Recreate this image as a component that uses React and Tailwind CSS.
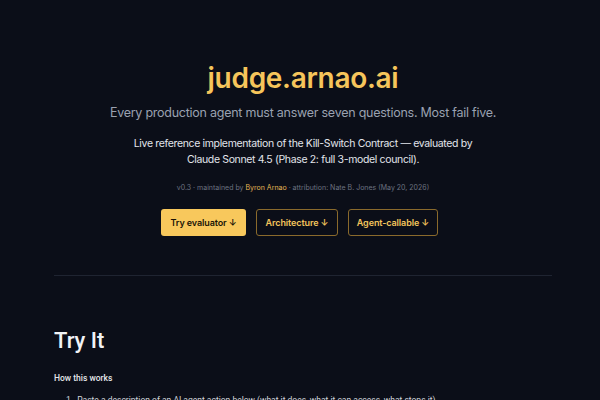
export default function App() {
  const sans = { fontFamily: "Inter, 'Noto Sans', sans-serif" };
  return (
    <div className="min-h-[400px] h-[400px] overflow-hidden bg-[#0b0e18] text-[#e5e7eb]" style={sans}>
      <div className="ml-[54px] w-[498px]">
        <header className="flex flex-col items-center pt-[58px] pb-[39px] border-b border-[#1f2431]">
          <h1 className="text-[28px] leading-[40px] font-semibold text-[#f6c55b] tracking-[-0.3px]">judge.arnao.ai</h1>
          <p className="mt-[5px] text-[12.5px] leading-[20px] text-[#9aa1b0] tracking-[-0.25px]">
            Every production agent must answer seven questions. Most fail five.
          </p>
          <p className="mt-[13px] text-[10.5px] leading-[16px] text-[#e2e5eb] text-center tracking-[-0.35px]">
            Live reference implementation of the Kill-Switch Contract — evaluated by
            <br />
            Claude Sonnet 4.5 (Phase 2: full 3-model council).
          </p>
          <p className="mt-[14px] text-[7px] leading-[12px] text-[#6b7280]">
            v0.3 · maintained by <span className="text-[#e3b556]">Byron Arnao</span> · attribution: Nate B. Jones (May 20, 2026)
          </p>
          <div className="mt-[15px] mr-[7px] flex gap-[10px]">
            <button className="h-[27px] w-[85px] rounded-[3px] bg-[#f8c85c] text-[9px] font-semibold text-[#1a1406] tracking-[-0.1px]">
              Try evaluator ↓
            </button>
            <button className="h-[27px] w-[82px] rounded-[3px] border border-[#8a6a2c] text-[9px] font-semibold text-[#f2c35c] tracking-[-0.1px]">
              Architecture ↓
            </button>
            <button className="h-[27px] w-[90px] rounded-[3px] border border-[#8a6a2c] text-[9px] font-semibold text-[#f2c35c] tracking-[-0.1px]">
              Agent-callable ↓
            </button>
          </div>
        </header>
        <section className="pt-[50px]" style={{ fontFamily: "Roboto, 'Noto Sans', sans-serif" }}>
          <h2 className="text-[22px] leading-[30px] font-medium text-[#f1f3f6]">Try It</h2>
          <h3 className="mt-[16px] text-[8.5px] leading-[12px] font-medium text-[#e5e7eb]">How this works</h3>
          <ol className="mt-[10px] pl-[12px] text-[8.5px] leading-[12px] text-[#d1d5db]">
            <li>1.&nbsp; Paste a description of an AI agent action below (what it does, what it can access, what stops it)</li>
          </ol>
        </section>
      </div>
    </div>
  );
}
